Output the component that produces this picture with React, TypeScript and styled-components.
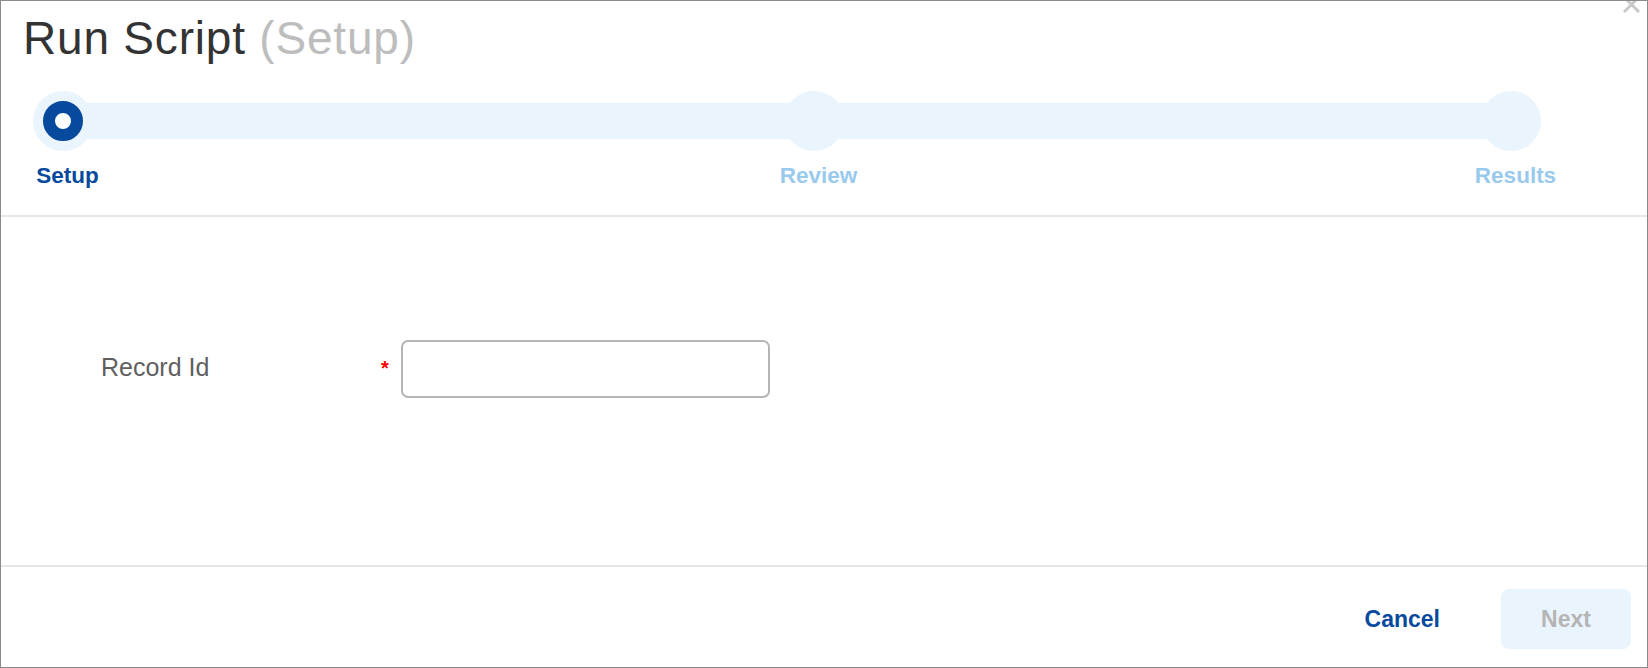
import React from "react";
import styled, { createGlobalStyle } from "styled-components";

const GlobalStyle = createGlobalStyle`
  html, body { margin: 0; padding: 0; background: #ffffff; }
  body { font-family: "Liberation Sans", Arial, Helvetica, sans-serif; }
  * { box-sizing: border-box; }
`;

const BLUE = "#074a9d";
const PALE = "#eaf4fd";

const Dialog = styled.div`
  position: relative;
  width: 1648px;
  height: 668px;
  border: 1px solid #8a8a8a;
  background: #fff;
  display: flex;
  flex-direction: column;
  overflow: hidden;
`;

const CloseButton = styled.button`
  position: absolute;
  top: -5px;
  right: 7px;
  width: 17px;
  height: 17px;
  padding: 0;
  border: 0;
  background: transparent;
  display: flex;
  cursor: pointer;
`;

const Header = styled.header`
  padding: 14px 0 28px 0;
  border-bottom: 2px solid #e6e6e6;
`;

const Title = styled.h1`
  margin: 0 0 0 22px;
  font-size: 46px;
  line-height: 46px;
  font-weight: 400;
  letter-spacing: 0.8px;
  color: #333333;
`;

const TitleSub = styled.span`
  color: #bdbdbd;
`;

const Stepper = styled.ol`
  position: relative;
  list-style: none;
  margin: 30px 106px 0 32px;
  padding: 0;
  display: grid;
  grid-template-columns: 1fr 1fr;

  &::before {
    content: "";
    position: absolute;
    left: 30px;
    right: 30px;
    top: 12px;
    height: 36px;
    background: ${PALE};
  }
`;

const Step = styled.li<{ $col: number; $align: "start" | "end"; $nudge?: number }>`
  position: relative;
  grid-row: 1;
  grid-column: ${(p) => p.$col};
  justify-self: ${(p) => p.$align};
  margin-left: ${(p) => p.$nudge ?? 0}px;
  width: 60px;
  display: flex;
  flex-direction: column;
  align-items: center;
`;

const Halo = styled.span`
  width: 60px;
  height: 60px;
  border-radius: 50%;
  background: ${PALE};
  display: flex;
  align-items: center;
  justify-content: center;
`;

const Dot = styled.span`
  width: 40px;
  height: 40px;
  border-radius: 50%;
  border: 12px solid ${BLUE};
  background: #fff;
`;

const StepLabel = styled.span<{ $active?: boolean }>`
  margin-top: 14px;
  padding-left: 9px;
  white-space: nowrap;
  font-size: 22.5px;
  line-height: 22px;
  font-weight: 700;
  color: ${(p) => (p.$active ? BLUE : "#99caee")};
`;

const Body = styled.main`
  flex: 1;
  padding: 123px 0 0 100px;
`;

const FieldRow = styled.div`
  display: grid;
  grid-template-columns: 280px 20px 369px;
  align-items: start;
`;

const FieldLabel = styled.label`
  margin-top: 15px;
  font-size: 25px;
  line-height: 25px;
  color: #5f5f5f;
`;

const Required = styled.span`
  margin-top: 18px;
  font-size: 20px;
  line-height: 20px;
  font-weight: 700;
  color: #ff0000;
`;

const TextInput = styled.input`
  width: 369px;
  height: 58px;
  border: 2px solid #b5b5b5;
  border-radius: 7px;
  padding: 0 12px;
  font-size: 22px;
  font-family: inherit;
  outline: none;
  background: #fff;
`;

const Footer = styled.footer`
  border-top: 2px solid #e6e6e6;
  padding: 22px 16px 18px 0;
  display: flex;
  justify-content: flex-end;
  align-items: center;
  gap: 31px;
`;

const Button = styled.button<{ $variant: "link" | "primary" }>`
  height: 60px;
  border: 0;
  border-radius: 8px;
  font-family: inherit;
  font-size: 23px;
  font-weight: 700;
  cursor: pointer;
  padding: ${(p) => (p.$variant === "link" ? "0 30px" : "0")};
  width: ${(p) => (p.$variant === "link" ? "auto" : "130px")};
  background: ${(p) => (p.$variant === "link" ? "transparent" : PALE)};
  color: ${(p) => (p.$variant === "link" ? BLUE : "#b5b5b5")};
`;

export default function App() {
  return (
    <>
      <GlobalStyle />
      <Dialog>
        <CloseButton aria-label="Close">
          <svg width="17" height="17" viewBox="0 0 17 17">
            <path d="M2 2 L15 15 M15 2 L2 15" stroke="#c9c9c9" strokeWidth="3" strokeLinecap="square" />
          </svg>
        </CloseButton>
        <Header>
          <Title>
            Run Script <TitleSub>(Setup)</TitleSub>
          </Title>
          <Stepper>
            <Step $col={1} $align="start">
              <Halo>
                <Dot />
              </Halo>
              <StepLabel $active>Setup</StepLabel>
            </Step>
            <Step $col={2} $align="start" $nudge={-3}>
              <Halo />
              <StepLabel>Review</StepLabel>
            </Step>
            <Step $col={2} $align="end">
              <Halo />
              <StepLabel>Results</StepLabel>
            </Step>
          </Stepper>
        </Header>
        <Body>
          <FieldRow>
            <FieldLabel htmlFor="record-id">Record Id</FieldLabel>
            <Required>*</Required>
            <TextInput id="record-id" type="text" />
          </FieldRow>
        </Body>
        <Footer>
          <Button $variant="link">Cancel</Button>
          <Button $variant="primary">Next</Button>
        </Footer>
      </Dialog>
    </>
  );
}
